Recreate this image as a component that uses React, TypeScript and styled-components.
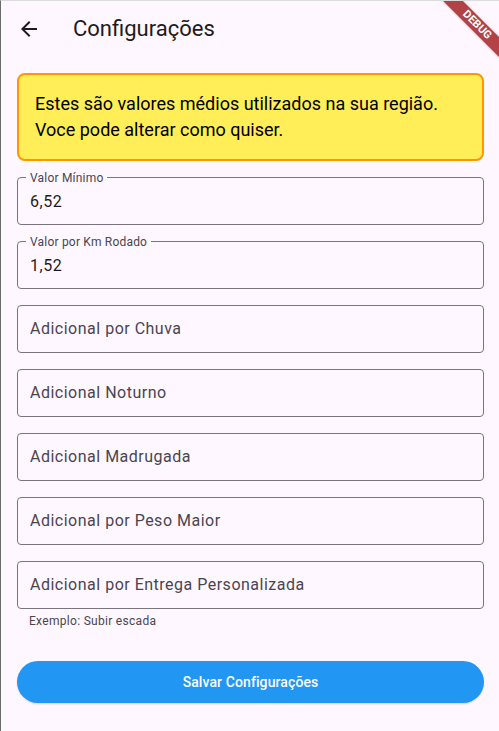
import React from "react";
import styled, { createGlobalStyle } from "styled-components";

const Global = createGlobalStyle`
  html, body { margin: 0; padding: 0; background: #FEF7FF; }
  body { font-family: Roboto, "Noto Sans", sans-serif; -webkit-font-smoothing: antialiased; }
  * { box-sizing: border-box; }
`;

const Frame = styled.div`
  position: relative;
  min-height: 731px;
  background: #FEF7FF;
  border-left: 1px solid #6b6b6b;
  border-top: 1px solid #dcdcdc;
  overflow: hidden;
`;

const AppBar = styled.header`
  height: 56px;
  display: flex;
  align-items: center;
`;

const Leading = styled.button`
  width: 56px;
  height: 56px;
  display: flex;
  align-items: center;
  justify-content: center;
  background: none;
  border: none;
  padding: 0;
  color: #1D1B20;
`;

const Title = styled.h1`
  margin: 0 0 0 16px;
  font-size: 22px;
  font-weight: 400;
  color: #1D1B20;
  line-height: 28px;
`;

const Content = styled.main`
  padding: 16px 15px 16px 16px;
  display: flex;
  flex-direction: column;
`;

const Notice = styled.div`
  background: #FFEE58;
  border: 2px solid #FF9800;
  border-radius: 8px;
  padding: 16px;
  font-size: 18px;
  line-height: 26px;
  color: #000;
  margin-bottom: 16px;
`;

const Fields = styled.div`
  display: flex;
  flex-direction: column;
  gap: 16px;
`;

const FieldWrap = styled.div`
  display: flex;
  flex-direction: column;
`;

const Box = styled.div`
  height: 48px;
  border: 1px solid #79747E;
  border-radius: 4px;
  padding: 0 12px;
  position: relative;
  display: flex;
  align-items: center;
`;

const FloatingLabel = styled.span`
  position: absolute;
  top: -8px;
  left: 8px;
  padding: 0 4px;
  background: #FEF7FF;
  font-size: 12px;
  line-height: 16px;
  color: #49454F;
  letter-spacing: 0.2px;
`;

const Value = styled.span<{ $hint?: boolean }>`
  font-size: 16px;
  color: ${(p) => (p.$hint ? "#49454F" : "#1D1B20")};
  letter-spacing: 0.5px;
  line-height: 24px;
  margin-top: ${(p) => (p.$hint ? "0" : "1px")};
`;

const Helper = styled.div`
  font-size: 12px;
  color: #49454F;
  padding: 4px 12px 0 12px;
  line-height: 16px;
  letter-spacing: 0.3px;
`;

const SaveButton = styled.button`
  margin-top: 32px;
  height: 42px;
  border: none;
  border-radius: 21px;
  background: #2196F3;
  color: #fff;
  font-family: Roboto, "Noto Sans", sans-serif;
  font-size: 14px;
  font-weight: 500;
  letter-spacing: 0.1px;
  box-shadow: 0 1px 2px rgba(0,0,0,0.15);
`;

const Banner = styled.div`
  position: absolute;
  width: 120px;
  height: 14px;
  left: 415.5px;
  top: 16.5px;
  transform: rotate(45deg);
  background: #B34246;
  color: #fff;
  font-size: 11px;
  font-weight: 700;
  line-height: 14px;
  text-align: center;
  letter-spacing: 0.1px;
  box-shadow: 0 0 3px rgba(0,0,0,0.2);
`;

type F = { label: string; value?: string; helper?: string };

const fields: F[] = [
  { label: "Valor Mínimo", value: "6,52" },
  { label: "Valor por Km Rodado", value: "1,52" },
  { label: "Adicional por Chuva" },
  { label: "Adicional Noturno" },
  { label: "Adicional Madrugada" },
  { label: "Adicional por Peso Maior" },
  { label: "Adicional por Entrega Personalizada", helper: "Exemplo: Subir escada" },
];

export default function App() {
  return (
    <Frame>
      <Global />
      <AppBar>
        <Leading aria-label="Voltar">
          <svg width="24" height="24" viewBox="0 0 24 24" fill="none">
            <path d="M20 11H7.83l5.59-5.59L12 4l-8 8 8 8 1.41-1.41L7.83 13H20v-2z" fill="#1D1B20" />
          </svg>
        </Leading>
        <Title>Configurações</Title>
      </AppBar>
      <Content>
        <Notice>
          Estes são valores médios utilizados na sua região.
          <br />
          Voce pode alterar como quiser.
        </Notice>
        <Fields>
          {fields.map((f) => (
            <FieldWrap key={f.label}>
              <Box>
                {f.value ? (
                  <>
                    <FloatingLabel>{f.label}</FloatingLabel>
                    <Value>{f.value}</Value>
                  </>
                ) : (
                  <Value $hint>{f.label}</Value>
                )}
              </Box>
              {f.helper && <Helper>{f.helper}</Helper>}
            </FieldWrap>
          ))}
        </Fields>
        <SaveButton>Salvar Configurações</SaveButton>
      </Content>
      <Banner>DEBUG</Banner>
    </Frame>
  );
}
